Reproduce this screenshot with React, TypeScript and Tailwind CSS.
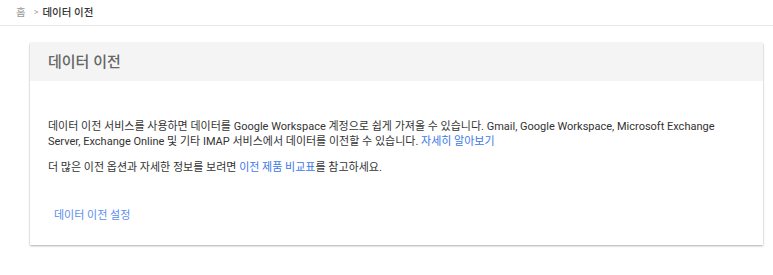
export default function App() {
  const font = { fontFamily: 'Roboto, "Noto Sans CJK KR", sans-serif' };
  return (
    <div className="w-[773px] h-[275px] bg-white text-[#333]" style={font}>
      <div className="h-[26px] border-b border-[#e8e8e8] flex items-center pl-[16px] text-[10.5px]">
        <span className="text-[#999]">홈</span>
        <span className="text-[#aaa] ml-[8px] mr-[4px] text-[9px]">&gt;</span>
        <span className="text-[#333] font-medium">데이터 이전</span>
      </div>

      <div className="pt-[17px] pl-[30px] pr-[10px]">
        <div className="bg-white shadow-[0_1px_2px_rgba(0,0,0,0.3),0_0_1px_rgba(0,0,0,0.12)]">
          <div className="h-[38px] bg-[#f4f4f4] flex items-center pl-[18px]">
            <h1 className="text-[15px] font-medium text-[#666]">데이터 이전</h1>
          </div>
          <div className="pl-[18px] pr-[40px] pt-[38px] pb-[22px] text-[11px] leading-[15px] text-[#333]">
            <p>
              데이터 이전 서비스를 사용하면 데이터를 Google Workspace 계정으로 쉽게 가져올 수 있습니다. Gmail, Google Workspace, Microsoft Exchange
              Server, Exchange Online 및 기타 IMAP 서비스에서 데이터를 이전할 수 있습니다.{' '}
              <a className="text-[#3b78e7]">자세히 알아보기</a>
            </p>
            <p className="mt-[11px]">
              더 많은 이전 옵션과 자세한 정보를 보려면 <a className="text-[#3b78e7]">이전 제품 비교표</a>를 참고하세요.
            </p>
            <div className="mt-[33px] pl-[6px] text-[#5b8def]">데이터 이전 설정</div>
          </div>
        </div>
      </div>
    </div>
  );
}
